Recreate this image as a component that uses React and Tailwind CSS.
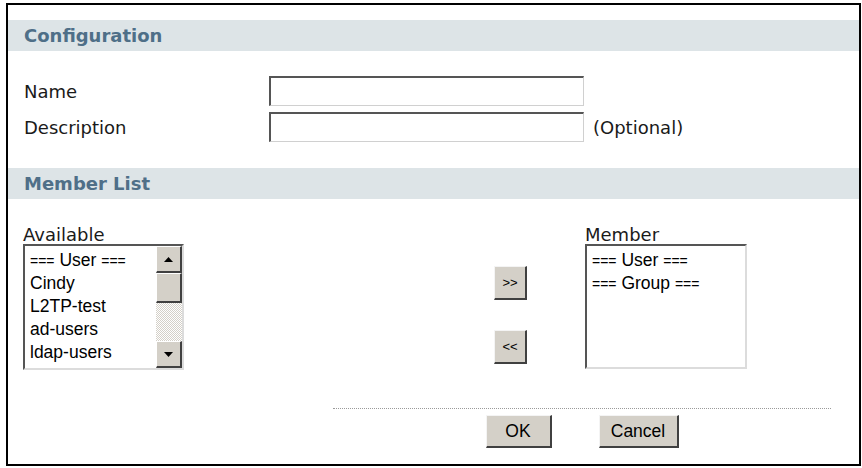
import React from "react";

const verdana = "font-['DejaVu_Sans',Verdana,sans-serif]";
const arial = "font-['Liberation_Sans',Arial,sans-serif]";

function Band({ children }) {
  return (
    <div className={`h-[31px] bg-[#dde4e7] flex items-center pl-[16px] font-bold text-[18px] text-[#4f6f88] ${verdana}`}>
      {children}
    </div>
  );
}

function TextInput() {
  return (
    <div className="w-[315px] h-[30px] bg-white border-t-2 border-l-2 border-r border-b border-t-[#555555] border-l-[#555555] border-r-[#d0d0d0] border-b-[#d0d0d0]" />
  );
}

function ScrollBtn({ dir }) {
  return (
    <div className="h-[27px] bg-[#d4d0c8] border-t border-l border-t-white border-l-white border-b-2 border-r-2 border-b-[#404040] border-r-[#404040] flex items-center justify-center">
      <svg width="9" height="5" viewBox="0 0 9 5">
        {dir === "up" ? (
          <polygon points="4.5,0 9,5 0,5" fill="#000" />
        ) : (
          <polygon points="0,0 9,0 4.5,5" fill="#000" />
        )}
      </svg>
    </div>
  );
}

function Eq() {
  return <span className="text-[14px] leading-[0]">===</span>;
}

function Item({ t }) {
  const m = t.match(/^=== (.*) ===$/);
  if (m) {
    return (
      <div className="whitespace-nowrap h-[23px]">
        <Eq /> {m[1]} <Eq />
      </div>
    );
  }
  return <div className="whitespace-nowrap h-[23px]">{t}</div>;
}

function ListItems({ items }) {
  return (
    <div className={`pt-[3px] pl-[5px] text-[17.5px] leading-[23px] text-black ${arial}`}>
      {items.map((t) => (
        <Item key={t} t={t} />
      ))}
    </div>
  );
}

function SmallBtn({ children }) {
  return (
    <div className={`w-[33px] h-[34px] bg-[#d4d0c8] border-t border-l border-t-[#f4f4f4] border-l-[#f4f4f4] border-b-2 border-r-2 border-b-[#404040] border-r-[#404040] flex items-center justify-center text-[13px] text-black ${arial}`}>
      {children}
    </div>
  );
}

function BigBtn({ w, children }) {
  return (
    <div className={`${w} h-[33px] bg-[#d4d0c8] border-t border-l border-t-[#f4f4f4] border-l-[#f4f4f4] border-b-2 border-r-2 border-b-[#404040] border-r-[#404040] flex items-center justify-center text-[17.5px] text-black ${arial}`}>
      {children}
    </div>
  );
}

export default function App() {
  return (
    <div className="w-[862px] h-[468px] bg-white pl-[6px] pt-[3px]">
      <div className={`w-[855px] h-[463px] border-2 border-black flex flex-col pt-[15px] text-[18px] text-[#1a1a1a] ${verdana}`}>
        <Band>Configuration</Band>

        <div className="mt-[25px] flex flex-col gap-[6px] pl-[16px]">
          <div className="flex items-center h-[30px]">
            <div className="w-[245px]">Name</div>
            <TextInput />
          </div>
          <div className="flex items-center h-[30px]">
            <div className="w-[245px]">Description</div>
            <TextInput />
            <div className="ml-[9px]">(Optional)</div>
          </div>
        </div>

        <div className="mt-[26px]">
          <Band>Member List</Band>
        </div>

        <div className="mt-[27px] flex pl-[15px]">
          <div className="flex flex-col">
            <div className="h-[18px] leading-[18px]">Available</div>
            <div className="w-[161px] h-[126px] bg-white border-t-2 border-l-2 border-r-2 border-b-2 border-t-[#555555] border-l-[#555555] border-r-[#dcdcdc] border-b-[#dcdcdc] flex">
              <div className="flex-1 overflow-hidden">
                <ListItems items={["=== User ===", "Cindy", "L2TP-test", "ad-users", "ldap-users"]} />
              </div>
              <div className="w-[26px] flex flex-col">
                <ScrollBtn dir="up" />
                <div className="h-[30px] bg-[#d4d0c8] border-t border-l border-t-white border-l-white border-b-2 border-r-2 border-b-[#404040] border-r-[#404040]" />
                <div className="flex-1 bg-[repeating-conic-gradient(#d4d0c8_0%_25%,#ffffff_0%_50%)] bg-[length:2px_2px]" />
                <ScrollBtn dir="down" />
              </div>
            </div>
          </div>

          <div className="ml-[310px] pt-[40px] flex flex-col gap-[30px]">
            <SmallBtn>&gt;&gt;</SmallBtn>
            <SmallBtn>&lt;&lt;</SmallBtn>
          </div>

          <div className="ml-[58px] flex flex-col">
            <div className="h-[18px] leading-[18px]">Member</div>
            <div className="w-[162px] h-[125px] bg-white border-t-2 border-l-2 border-r-2 border-b-2 border-t-[#555555] border-l-[#555555] border-r-[#dcdcdc] border-b-[#dcdcdc]">
              <ListItems items={["=== User ===", "=== Group ==="]} />
            </div>
          </div>
        </div>

        <div className="mt-[38px] ml-[325px] w-[498px] border-t border-dotted border-[#9a9a9a]" />

        <div className="mt-[6px] ml-[325px] w-[498px] flex justify-center gap-[47px]">
          <BigBtn w="w-[66px]">OK</BigBtn>
          <BigBtn w="w-[80px]">Cancel</BigBtn>
        </div>
      </div>
    </div>
  );
}
